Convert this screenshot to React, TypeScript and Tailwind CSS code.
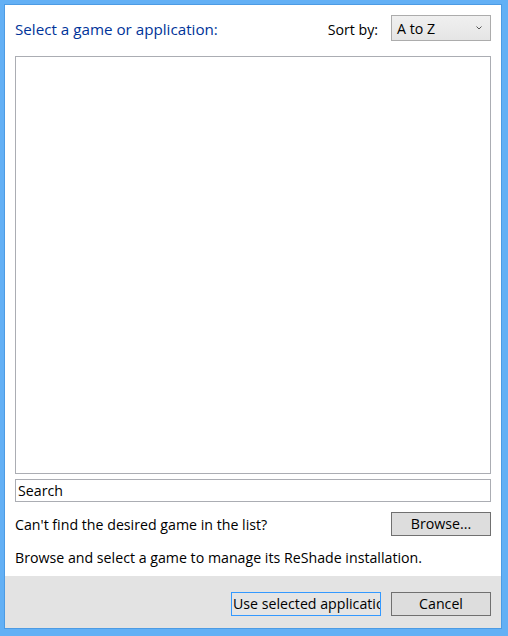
export default function App() {
  return (
    <div
      className="w-[508px] h-[636px] bg-[#63b0f5] pl-[4px] pt-[4px] pr-[6px] pb-[7px] flex"
      style={{ fontFamily: '"Open Sans", "Liberation Sans", sans-serif' }}
    >
      <div className="flex-1 flex flex-col border border-[#4c9be4] bg-white text-[14.2px] text-black">
        <div className="flex-1 flex flex-col px-[10px] pt-[10px]">
          <div className="flex items-center h-[26px]">
            <span className="text-[#003399] text-[15.2px] flex-1 pt-[3px]">Select a game or application:</span>
            <span className="mr-[13px] pt-[3px]">Sort by:</span>
            <div className="w-[100px] h-[26px] border border-[#acacac] bg-gradient-to-b from-[#f0f0f0] to-[#e5e5e5] flex items-center pl-[5px] pr-[8px]">
              <span className="flex-1 pt-[1px]">A to Z</span>
              <svg width="6" height="4" viewBox="0 0 6 4" className="mb-[1px]">
                <path d="M0.5 0.5 L3 3 L5.5 0.5" fill="none" stroke="#555" strokeWidth="1" />
              </svg>
            </div>
          </div>
          <div className="mt-[15px] h-[418px] border border-[#abadb3] bg-white" />
          <div className="mt-[5px] h-[23px] border border-[#abadb3] flex items-center px-[2px]">
            <span className="pt-[1px]">Search</span>
          </div>
          <div className="mt-[10px] flex items-center">
            <span className="flex-1 pt-[1px]">Can't find the desired game in the list?</span>
            <button className="w-[100px] h-[24px] border border-[#707070] bg-[#dddddd] flex items-center justify-center">
              Browse...
            </button>
          </div>
          <p className="mt-[11px]">Browse and select a game to manage its ReShade installation.</p>
        </div>
        <div className="h-[52px] bg-[#e3e3e3] flex justify-end gap-[10px] px-[10px] pt-[16px]">
          <button className="w-[150px] h-[24px] border border-[#3399ff] bg-[#e5e5e5] overflow-hidden whitespace-nowrap text-left pl-[1px]">
            Use selected application
          </button>
          <button className="w-[100px] h-[24px] border border-[#707070] bg-[#dddddd] flex items-center justify-center">
            Cancel
          </button>
        </div>
      </div>
    </div>
  )
}
